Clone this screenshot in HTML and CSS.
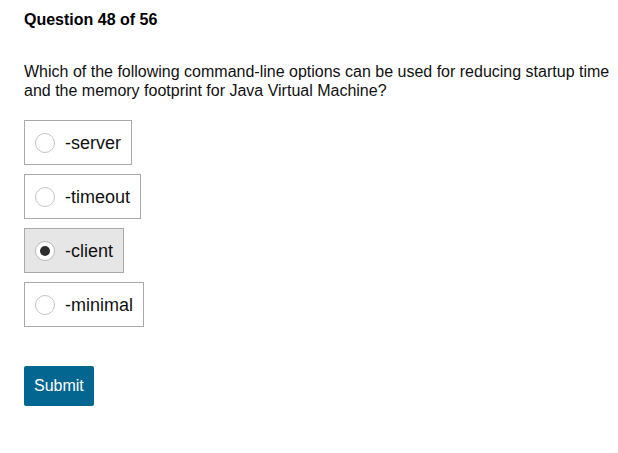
FILE: index.html
```html
<!DOCTYPE html>
<html>
<head>
<meta charset="utf-8">
<link rel="stylesheet" href="styles.css">
</head>
<body>
<div class="quiz">
  <h1 class="qnum">Question 48 of 56</h1>
  <p class="qtext">Which of the following command-line options can be used for reducing startup time and the memory footprint for Java Virtual Machine?</p>
  <div class="options">
    <label class="option"><span class="radio"></span><span class="label">-server</span></label>
    <label class="option"><span class="radio"></span><span class="label">-timeout</span></label>
    <label class="option selected"><span class="radio checked"></span><span class="label">-client</span></label>
    <label class="option"><span class="radio"></span><span class="label">-minimal</span></label>
  </div>
  <button class="submit">Submit</button>
</div>
</body>
</html>
```
FILE: styles.css
```css
html, body {
  margin: 0;
  padding: 0;
  background: #fff;
}
body {
  font-family: "Liberation Sans", Arial, sans-serif;
  color: #111;
}
.quiz {
  padding: 11px 8px 0 24px;
  max-width: 590px;
}
.qnum {
  font-size: 16px;
  font-weight: bold;
  line-height: 18px;
  margin: 0;
  color: #000;
}
.qtext {
  font-size: 16px;
  line-height: 19px;
  margin: 33px 0 0 0;
  color: #111;
}
.options {
  margin-top: 20px;
  display: flex;
  flex-direction: column;
  align-items: flex-start;
  gap: 9px;
}
.option {
  display: flex;
  align-items: center;
  height: 45px;
  box-sizing: border-box;
  border: 1px solid #aaa;
  padding: 0 10px;
  background: #fff;
}
.option.selected {
  background: #e6e6e6;
}
.radio {
  width: 20px;
  height: 20px;
  box-sizing: border-box;
  border: 1px solid #c4c4c4;
  border-radius: 50%;
  background: #fff;
  margin-right: 10px;
  display: flex;
  align-items: center;
  justify-content: center;
}
.radio.checked {
  border-color: #b8b8b8;
}
.radio.checked::after {
  content: "";
  width: 10px;
  height: 10px;
  border-radius: 50%;
  background: #2e2e2e;
}
.label {
  font-size: 18px;
  line-height: 22px;
  color: #111;
}
.submit {
  margin-top: 39px;
  display: block;
  height: 40px;
  padding: 0 10px;
  border: none;
  border-radius: 2px;
  background: #036690;
  color: #fff;
  font-family: "Liberation Sans", Arial, sans-serif;
  font-size: 16px;
}
```
